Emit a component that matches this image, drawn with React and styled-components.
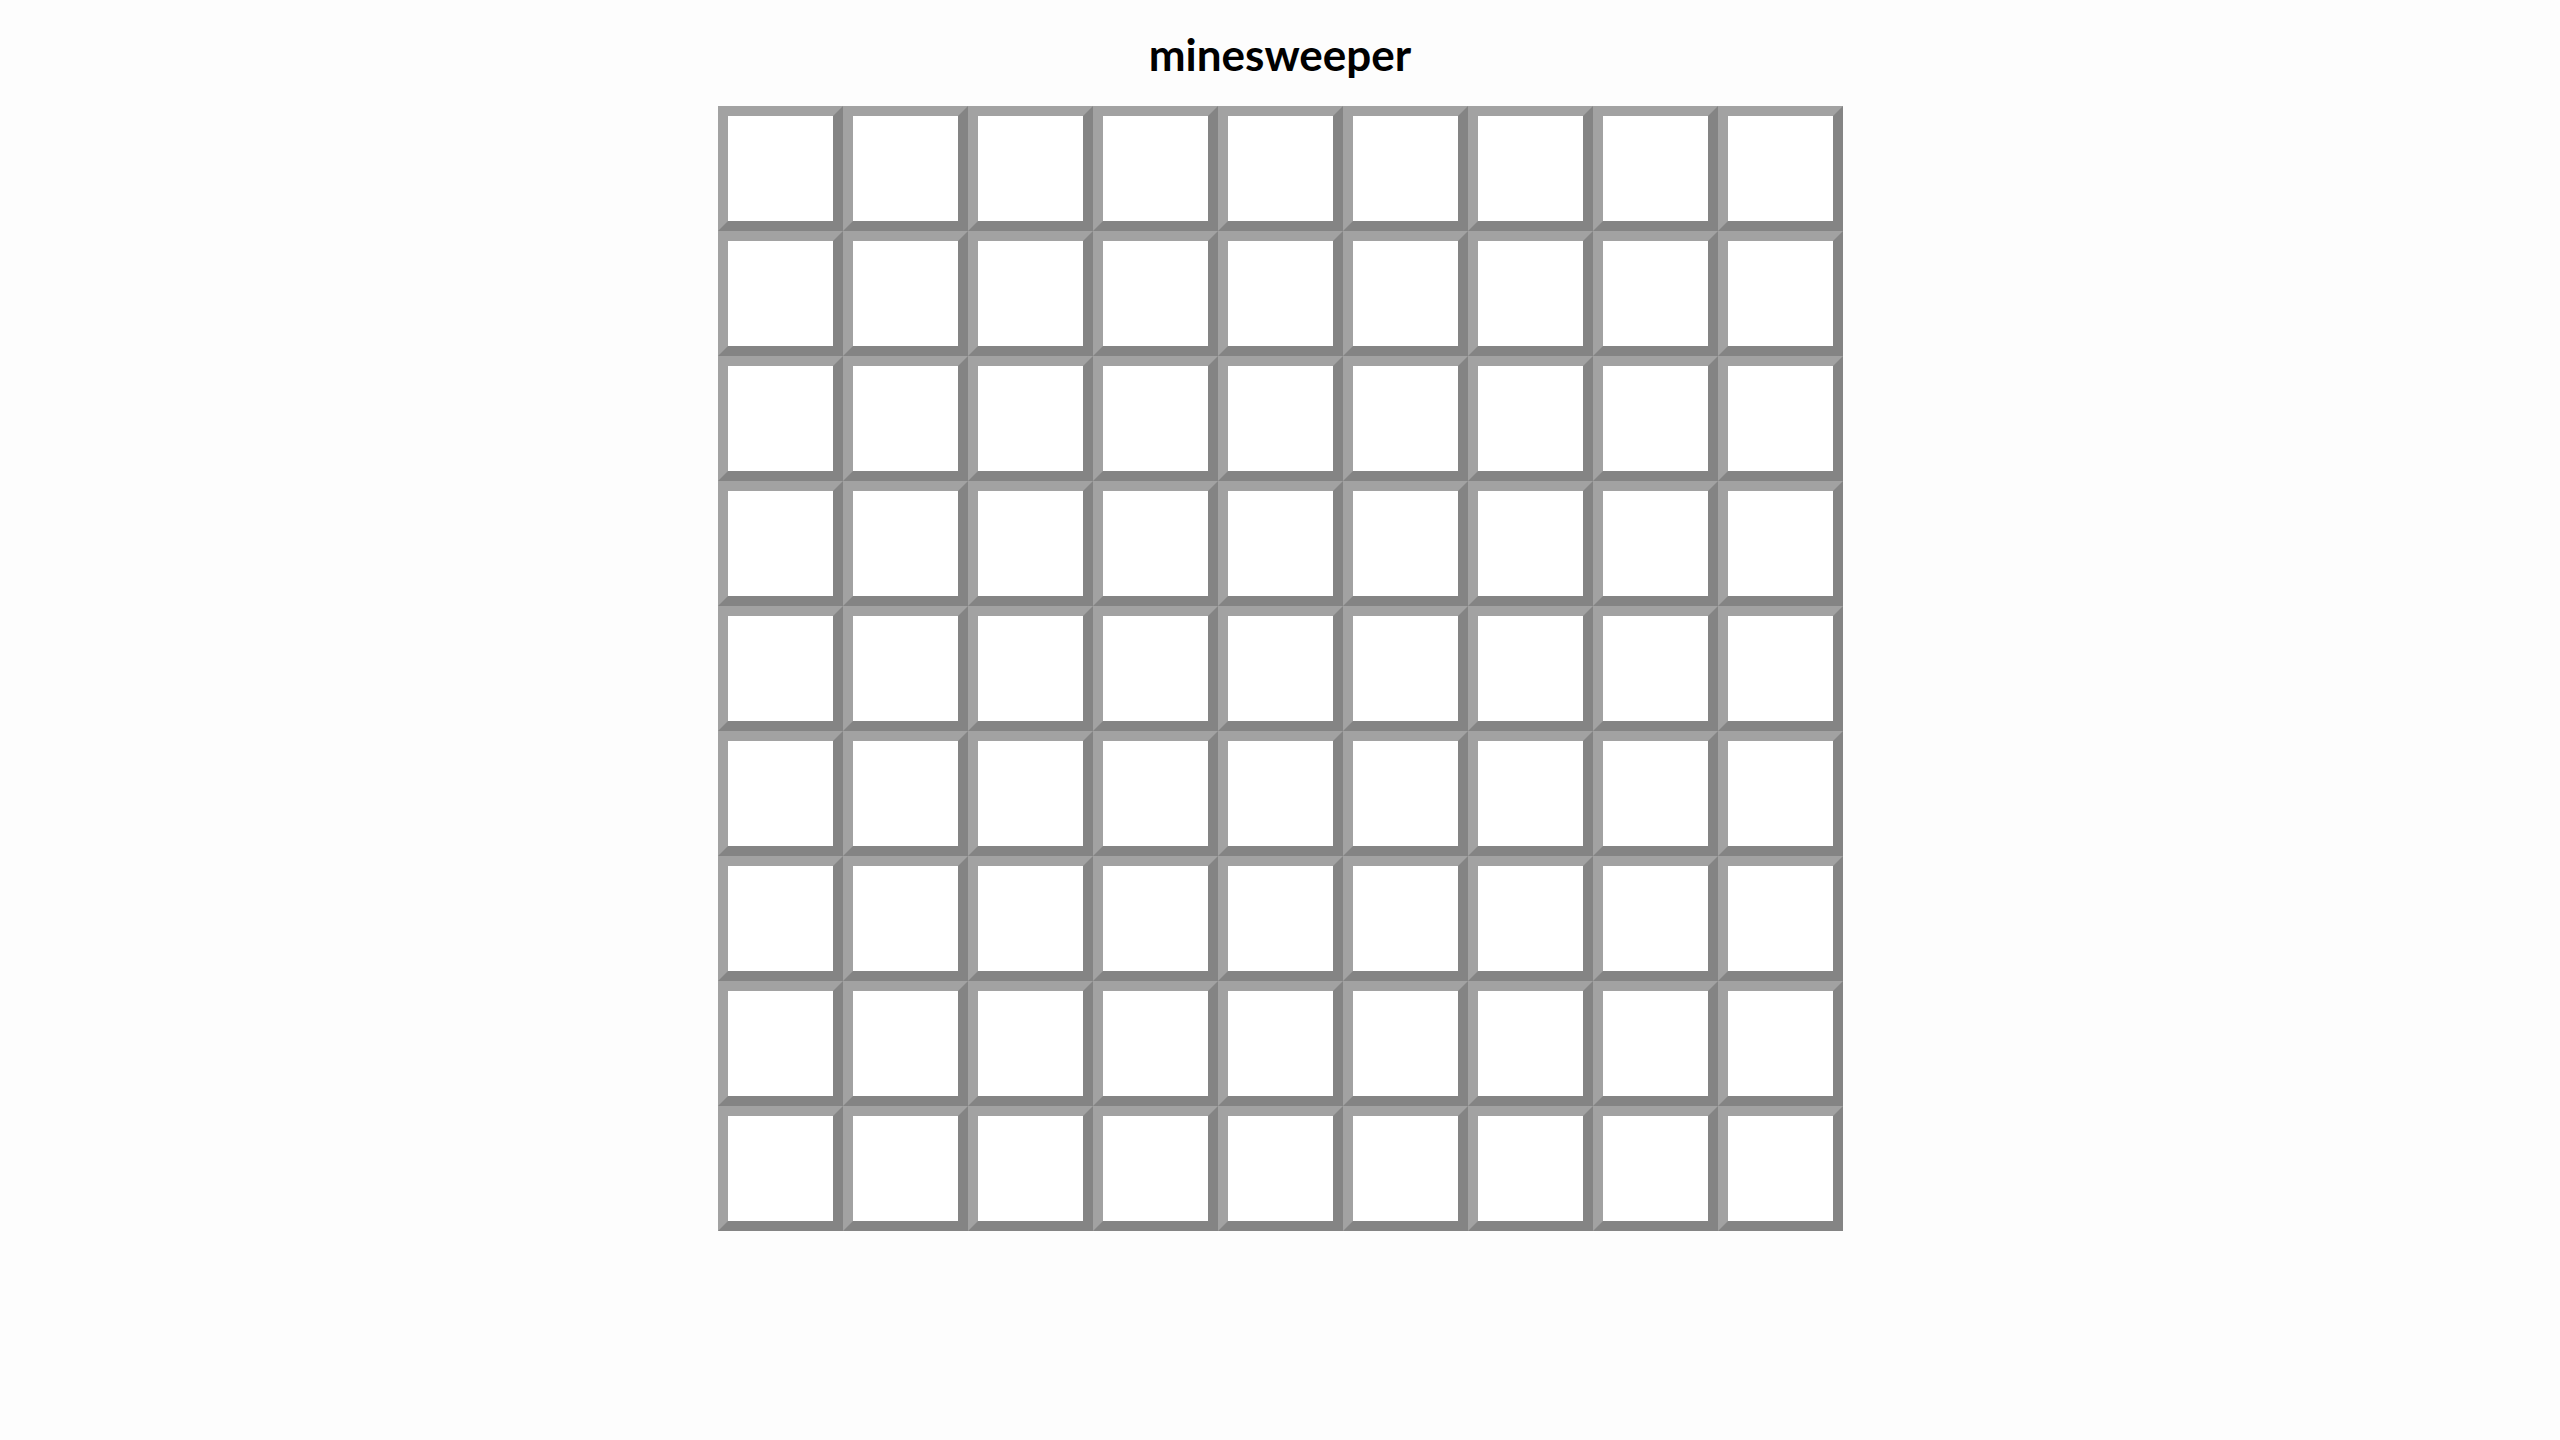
import React from 'react'
import styled, { createGlobalStyle } from 'styled-components'

const SIZE = 9

export default function App() {
  const cells = Array.from({ length: SIZE * SIZE }, (_, i) => i)

  return (
    <>
      <GlobalStyle />
      <Page>
        <Title>minesweeper</Title>
        <Board $size={SIZE}>
          {cells.map((i) => (
            <Cell key={i} />
          ))}
        </Board>
      </Page>
    </>
  )
}

const GlobalStyle = createGlobalStyle`
  html, body {
    margin: 0;
    padding: 0;
    background: #fdfdfd;
  }
  body {
    font-family: "Lato", "Open Sans", sans-serif;
  }
`

const Page = styled.div`
  display: flex;
  flex-direction: column;
  align-items: center;
  min-height: 1440px;
`

const Title = styled.h1`
  margin: 26px 0 24px;
  font-size: 44px;
  line-height: 56px;
  font-weight: 700;
  color: #000;
`

const Board = styled.div`
  display: grid;
  grid-template-columns: repeat(${(p) => p.$size}, 125px);
  grid-auto-rows: 125px;
`

const Cell = styled.div`
  box-sizing: border-box;
  background: #ffffff;
  border: 10px solid;
  border-color: #a2a2a2 #848484 #848484 #a2a2a2;
`
